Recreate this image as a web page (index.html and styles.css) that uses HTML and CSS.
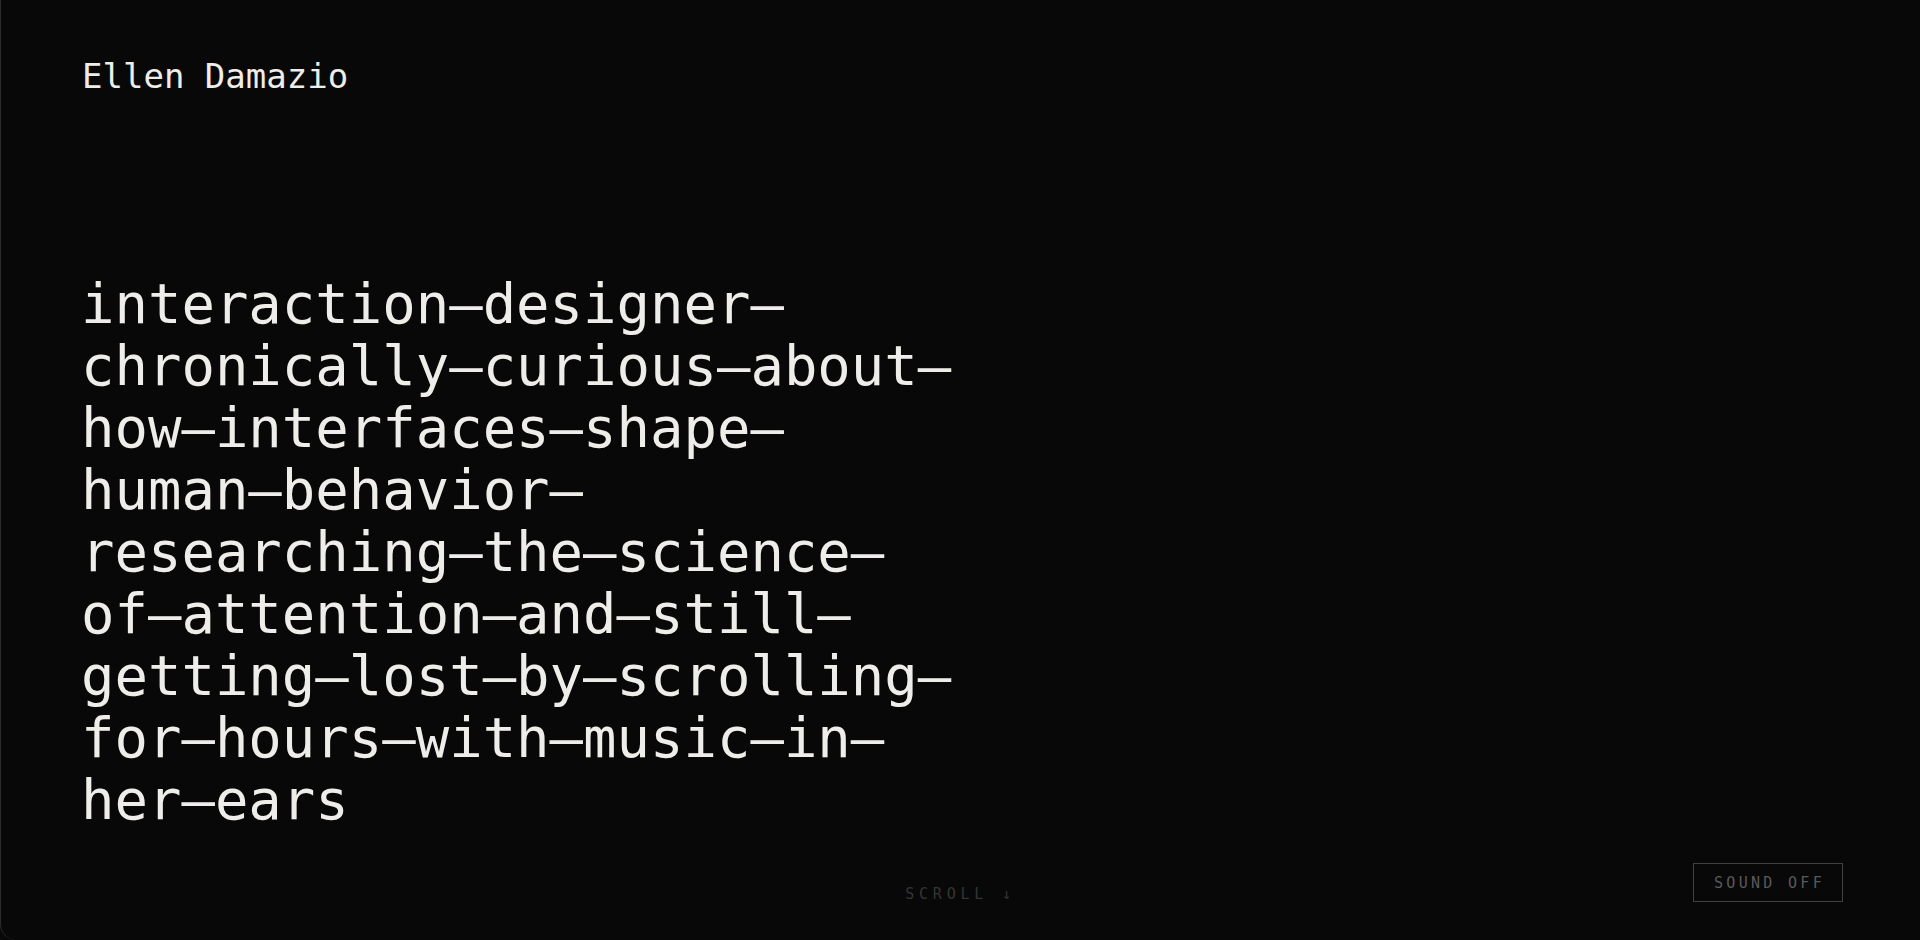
FILE: index.html
```html
<!DOCTYPE html>
<html lang="en">
<head>
<meta charset="utf-8">
<title>Ellen Damazio</title>
<link rel="stylesheet" href="styles.css">
</head>
<body>
<div class="frame">
  <header class="site-header">
    <div class="name">Ellen Damazio</div>
  </header>
  <main class="intro">
    <h1 class="headline">interaction–designer–chronically–curious–about–how–interfaces–shape–human–behavior–researching–the–science–of–attention–and–still–getting–lost–by–scrolling–for–hours–with–music–in–her–ears</h1>
  </main>
  <div class="scroll-hint">SCROLL ↓</div>
  <button class="sound-toggle" type="button">SOUND OFF</button>
</div>
</body>
</html>
```
FILE: styles.css
```css
html, body {
  margin: 0;
  padding: 0;
  background: #080808;
}

body {
  font-family: "DejaVu Sans Mono", "Liberation Mono", monospace;
  color: #eeede9;
  overflow: hidden;
}

.frame {
  position: relative;
  box-sizing: border-box;
  height: 940px;
  padding: 56px 80px 0 80px;
  border-left: 1px solid #2c2c2c;
  border-bottom-left-radius: 16px;
  background: #080808;
}

.site-header {
  display: flex;
}

.name {
  font-size: 34px;
  line-height: 1.2;
  padding-left: 1px;
}

.intro {
  margin-top: 176px;
}

.headline {
  margin: 0;
  max-width: 885px;
  font-family: "DejaVu Sans Mono", "Liberation Mono", monospace;
  font-weight: normal;
  font-size: 55.6px;
  line-height: 62px;
  color: #eeede9;
  word-wrap: break-word;
}

.scroll-hint {
  position: absolute;
  left: 0;
  right: 0;
  bottom: 38px;
  text-align: center;
  font-size: 15px;
  line-height: 1;
  letter-spacing: 0.32em;
  color: #353535;
}

.sound-toggle {
  position: absolute;
  right: 77px;
  bottom: 38px;
  box-sizing: border-box;
  width: 150px;
  height: 39px;
  display: flex;
  align-items: center;
  justify-content: center;
  padding: 0 0 0 3px;
  background: transparent;
  border: 1px solid #404040;
  border-radius: 0;
  font-family: "DejaVu Sans Mono", "Liberation Mono", monospace;
  font-size: 15px;
  letter-spacing: 0.22em;
  color: #5a5a5a;
  cursor: pointer;
}
```
